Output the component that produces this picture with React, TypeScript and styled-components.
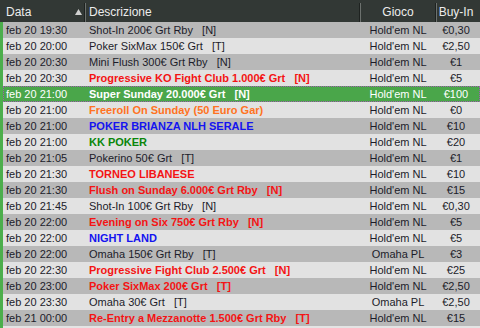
import React from "react";
import styled, { createGlobalStyle, css } from "styled-components";

const Global = createGlobalStyle`
  html, body { margin: 0; padding: 0; background: #e4e4e4; }
  body { font-family: "Liberation Sans", Arial, sans-serif; }
`;

type Tone = "normal" | "red" | "orange" | "blue" | "green";

interface Row {
  date: string;
  desc: string;
  game: string;
  buyin: string;
  tone?: Tone;
  selected?: boolean;
}

const rows: Row[] = [
  { date: "feb 20 19:30", desc: "Shot-In 200€ Grt Rby   [N]", game: "Hold'em NL", buyin: "€0,30" },
  { date: "feb 20 20:00", desc: "Poker SixMax 150€ Grt   [T]", game: "Hold'em NL", buyin: "€2,50" },
  { date: "feb 20 20:30", desc: "Mini Flush 300€ Grt Rby   [N]", game: "Hold'em NL", buyin: "€1" },
  { date: "feb 20 20:30", desc: "Progressive KO Fight Club 1.000€ Grt   [N]", game: "Hold'em NL", buyin: "€5", tone: "red" },
  { date: "feb 20 21:00", desc: "Super Sunday 20.000€ Grt   [N]", game: "Hold'em NL", buyin: "€100", tone: "red", selected: true },
  { date: "feb 20 21:00", desc: "Freeroll On Sunday (50 Euro Gar)", game: "Hold'em NL", buyin: "€0", tone: "orange" },
  { date: "feb 20 21:00", desc: "POKER BRIANZA NLH SERALE", game: "Hold'em NL", buyin: "€10", tone: "blue" },
  { date: "feb 20 21:00", desc: "KK POKER", game: "Hold'em NL", buyin: "€20", tone: "green" },
  { date: "feb 20 21:05", desc: "Pokerino 50€ Grt   [T]", game: "Hold'em NL", buyin: "€1" },
  { date: "feb 20 21:30", desc: "TORNEO LIBANESE", game: "Hold'em NL", buyin: "€10", tone: "red" },
  { date: "feb 20 21:30", desc: "Flush on Sunday 6.000€ Grt Rby   [N]", game: "Hold'em NL", buyin: "€15", tone: "red" },
  { date: "feb 20 21:45", desc: "Shot-In 100€ Grt Rby   [N]", game: "Hold'em NL", buyin: "€0,30" },
  { date: "feb 20 22:00", desc: "Evening on Six 750€ Grt Rby   [N]", game: "Hold'em NL", buyin: "€5", tone: "red" },
  { date: "feb 20 22:00", desc: "NIGHT LAND", game: "Hold'em NL", buyin: "€5", tone: "blue" },
  { date: "feb 20 22:00", desc: "Omaha 150€ Grt Rby   [T]", game: "Omaha PL", buyin: "€3" },
  { date: "feb 20 22:30", desc: "Progressive Fight Club 2.500€ Grt   [N]", game: "Hold'em NL", buyin: "€25", tone: "red" },
  { date: "feb 20 23:00", desc: "Poker SixMax 200€ Grt   [T]", game: "Hold'em NL", buyin: "€2,50", tone: "red" },
  { date: "feb 20 23:30", desc: "Omaha 30€ Grt   [T]", game: "Omaha PL", buyin: "€2,50" },
  { date: "feb 21 00:00", desc: "Re-Entry a Mezzanotte 1.500€ Grt Rby   [T]", game: "Hold'em NL", buyin: "€15", tone: "red" },
];

const toneColor: Record<Tone, string> = {
  normal: "#1c1c2a",
  red: "#f41414",
  orange: "#ff7322",
  blue: "#1414f0",
  green: "#0a860a",
};

const Table = styled.div`
  width: 480px;
  height: 328px;
  overflow: hidden;
  background: #e4e4e4;
  display: flex;
  flex-direction: column;
`;

const Header = styled.div`
  height: 22px;
  flex: none;
  background: #323835;
  display: grid;
  grid-template-columns: 85px 275px 76px 1fr;
  color: #ececec;
  font-size: 12px;
`;

const HeadCell = styled.div<{ $align?: "left" | "center"; $sep?: boolean }>`
  position: relative;
  display: flex;
  align-items: center;
  justify-content: ${(p) => (p.$align === "center" ? "center" : "flex-start")};
  padding: 1px 0 0 ${(p) => (p.$align === "center" ? "0" : "6px")};
  ${(p) =>
    p.$sep &&
    css`
      &::before {
        content: "";
        position: absolute;
        left: 0;
        top: 3px;
        bottom: 0;
        width: 1px;
        background: #6c716e;
      }
      &::after {
        content: "";
        position: absolute;
        left: -1px;
        top: 3px;
        bottom: 0;
        width: 1px;
        background: #1e2220;
      }
    `}
`;

const SortArrow = styled.svg`
  position: absolute;
  right: 3px;
  top: 9px;
`;

const Body = styled.div`
  flex: 1;
  border-left: 3px solid #4cae4c;
  display: flex;
  flex-direction: column;
`;

const RowLine = styled.div<{ $odd: boolean; $selected?: boolean }>`
  height: 16px;
  flex: none;
  display: grid;
  grid-template-columns: 82px 275px 76px 1fr;
  align-items: center;
  font-size: 11px;
  line-height: 16px;
  color: ${(p) => (p.$selected ? "#ffffff" : "#1c1c2a")};
  background: ${(p) => (p.$selected ? "#4aa64a" : p.$odd ? "#e2e2e2" : "#b8b8b8")};
  ${(p) =>
    p.$selected &&
    css`
      outline: 1px dotted #a05ab0;
      outline-offset: -1px;
    `}
`;

const DateCell = styled.div`
  padding-left: 3px;
  white-space: nowrap;
`;

const DescCell = styled.div<{ $tone: Tone; $selected?: boolean }>`
  padding-left: 4px;
  white-space: pre;
  overflow: hidden;
  color: ${(p) => (p.$selected ? "#ffffff" : toneColor[p.$tone])};
  font-weight: ${(p) => (p.$tone === "normal" ? 400 : 700)};
`;

const CenterCell = styled.div`
  text-align: center;
  white-space: nowrap;
`;

const BuyCell = styled.div`
  text-align: center;
  padding-right: 4px;
  white-space: nowrap;
`;

export default function App() {
  return (
    <>
      <Global />
      <Table>
        <Header>
          <HeadCell>
            Data
            <SortArrow width="7" height="6" viewBox="0 0 7 6">
              <polygon points="3.5,0 7,6 0,6" fill="#d0d0d0" />
            </SortArrow>
          </HeadCell>
          <HeadCell $sep style={{ paddingLeft: 4 }}>Descrizione</HeadCell>
          <HeadCell $sep $align="center">Gioco</HeadCell>
          <HeadCell $sep $align="center" style={{ paddingRight: 4 }}>Buy-In</HeadCell>
        </Header>
        <Body>
          {rows.map((r, i) => (
            <RowLine key={i} $odd={i % 2 === 1} $selected={r.selected}>
              <DateCell>{r.date}</DateCell>
              <DescCell $tone={r.tone ?? "normal"} $selected={r.selected}>
                {r.desc}
              </DescCell>
              <CenterCell>{r.game}</CenterCell>
              <BuyCell>{r.buyin}</BuyCell>
            </RowLine>
          ))}
        </Body>
      </Table>
    </>
  );
}
